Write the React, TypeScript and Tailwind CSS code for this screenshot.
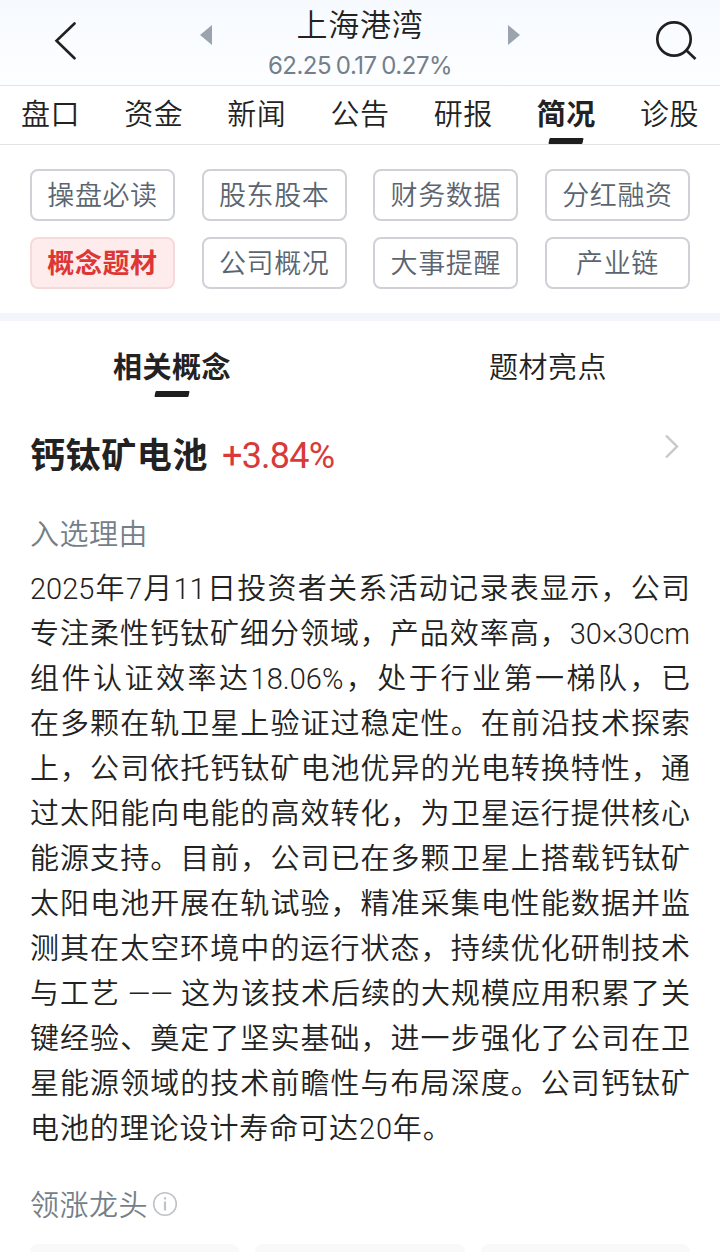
import clsx from 'clsx';

const tabs = ['盘口', '资金', '新闻', '公告', '研报', '简况', '诊股'];

const sections = [
  '操盘必读',
  '股东股本',
  '财务数据',
  '分红融资',
  '概念题材',
  '公司概况',
  '大事提醒',
  '产业链',
];

const reasonLines = [
  '2025年7月11日投资者关系活动记录表显示，公司',
  '专注柔性钙钛矿细分领域，产品效率高，30×30cm',
  '组件认证效率达18.06%，处于行业第一梯队，已',
  '在多颗在轨卫星上验证过稳定性。在前沿技术探索',
  '上，公司依托钙钛矿电池优异的光电转换特性，通',
  '过太阳能向电能的高效转化，为卫星运行提供核心',
  '能源支持。目前，公司已在多颗卫星上搭载钙钛矿',
  '太阳电池开展在轨试验，精准采集电性能数据并监',
  '测其在太空环境中的运行状态，持续优化研制技术',
  '与工艺 —— 这为该技术后续的大规模应用积累了关',
  '键经验、奠定了坚实基础，进一步强化了公司在卫',
  '星能源领域的技术前瞻性与布局深度。公司钙钛矿',
  '电池的理论设计寿命可达20年。',
];

function Underline({ className }: { className?: string }) {
  return <span className={clsx('absolute left-1/2 h-1.5 w-[34px] -translate-x-1/2 -skew-x-12 rounded-[1px] bg-[#1e1e1e]', className)} />;
}

function Header() {
  return (
    <header className="flex h-[86px] items-start border-b border-[#e2e3e5] bg-gradient-to-b from-[#f6faff] to-[#fdfeff] pl-[54px] pr-[22px]">
      <button className="mt-[22px]">
        <svg width="23" height="38" viewBox="0 0 23 38" fill="none" stroke="#202020" strokeWidth="2.6" strokeLinecap="round">
          <path d="M20.5 1.5 2.5 18.8 20.5 36.3" />
        </svg>
      </button>
      <div className="ml-[123px] flex items-start">
        <svg className="mt-[25px]" width="12" height="20" viewBox="0 0 12 20" fill="#9aa3ae">
          <path d="M12 0v20L0 10z" />
        </svg>
        <div className="flex w-[296px] flex-col items-center">
          <h1 className="h-[46px] text-[31px] leading-[45px] tracking-[0.8px]">上海港湾</h1>
          <p className="font-['Inter','Noto_Sans_CJK_SC',sans-serif] text-[24px] leading-10 font-normal tracking-[-0.5px] [word-spacing:-1.5px] text-[#747f8a]">
            62.25 0.17 0.27%
          </p>
        </div>
        <svg className="mt-[25px]" width="12" height="20" viewBox="0 0 12 20" fill="#9aa3ae">
          <path d="M0 0v20l12-10z" />
        </svg>
      </div>
      <button className="mt-5 ml-auto">
        <svg width="44" height="42" viewBox="0 0 44 42" fill="none" stroke="#202020" strokeWidth="2.7">
          <circle cx="20" cy="19" r="16.7" />
          <path d="m32 30 9.5 9" />
        </svg>
      </button>
    </header>
  );
}

function Tabs() {
  return (
    <nav className="flex h-[59px] justify-between border-b border-[#e2e3e5] px-[21px]">
      {tabs.map((tab) => (
        <button
          key={tab}
          className={clsx('relative h-[53px] text-[29px] leading-[53px] tracking-[0.5px]', tab === '简况' && 'font-bold')}
        >
          {tab}
          {tab === '简况' && <Underline className="top-[52px]" />}
        </button>
      ))}
    </nav>
  );
}

function SectionGrid() {
  return (
    <div className="grid grid-cols-[repeat(4,145px)] justify-between gap-y-4 border-b-8 border-[#f4f5fa] px-[30px] pt-6 pb-6">
      {sections.map((name) => (
        <button
          key={name}
          className={clsx(
            'h-[52px] rounded-lg border-2 pb-0.5 text-[27px] leading-[44px] tracking-[0.6px]',
            name === '概念题材'
              ? 'border-[#f6dadb] bg-[#feebeb] font-bold text-[#dd3636]'
              : 'border-[#ced1d5] text-[#5a6570]',
          )}
        >
          {name}
        </button>
      ))}
    </div>
  );
}

export default function App() {
  return (
    <div className="h-[1252px] w-[720px] overflow-hidden bg-white font-['Noto_Sans_CJK_SC',sans-serif] font-[350] text-[#222]">
      <Header />
      <Tabs />
      <SectionGrid />

      <div className="flex h-[84px] justify-between px-[113px] pt-[23px] text-[29px] leading-[42px] tracking-[0.5px]">
        <button className="relative h-[42px] font-bold">
          相关概念
          <Underline className="top-[47px]" />
        </button>
        <button className="h-[42px]">题材亮点</button>
      </div>

      <main className="px-[30px]">
        <div className="flex h-[98px] items-start justify-between pr-2.5">
          <h2 className="flex pt-[22px] text-[35px] leading-[52px] font-bold tracking-[0.6px]">
            钙钛矿电池
            <span className="ml-3.5 font-['Roboto',sans-serif] text-[36px] leading-[58px] font-[450] tracking-[-0.8px] text-[#d83a3a]">+3.84%</span>
          </h2>
          <svg className="mt-[29px]" width="16" height="25" viewBox="0 0 16 25" fill="none" stroke="#c8c8c8" strokeWidth="2.4">
            <path d="m2 1.5 11 11-11 11" />
          </svg>
        </div>

        <h3 className="h-[62px] pt-2 text-[29px] leading-[42px] tracking-[0.5px] text-[#747f8a]">入选理由</h3>

        <div className="pt-0.5 font-['Roboto','Noto_Sans_CJK_SC',sans-serif] text-[29px] leading-[45px]">
          {reasonLines.map((line, i) => (
            <p
              key={line}
              className={clsx('whitespace-nowrap', i < reasonLines.length - 1 ? '[text-align-last:justify]' : 'tracking-[0.9px]')}
            >
              {line}
            </p>
          ))}
        </div>

        <div className="flex h-[92px] items-center pt-[9px] text-[29px] tracking-[0.5px] text-[#747f8a]">
          <span className="leading-[42px]">领涨龙头</span>
          <svg className="ml-1 mt-0.5" width="26" height="26" viewBox="0 0 26 26" fill="none" stroke="#bfc3c8">
            <circle cx="13" cy="13" r="11.3" strokeWidth="1.6" />
            <path d="M13 10.5v9M13 6.2v2.4" strokeWidth="2.2" />
          </svg>
        </div>

        <div className="grid grid-cols-3 gap-4">
          <div className="h-24 rounded-lg bg-[#f9f9fb]" />
          <div className="h-24 rounded-lg bg-[#f9f9fb]" />
          <div className="h-24 rounded-lg bg-[#f9f9fb]" />
        </div>
      </main>
    </div>
  );
}
